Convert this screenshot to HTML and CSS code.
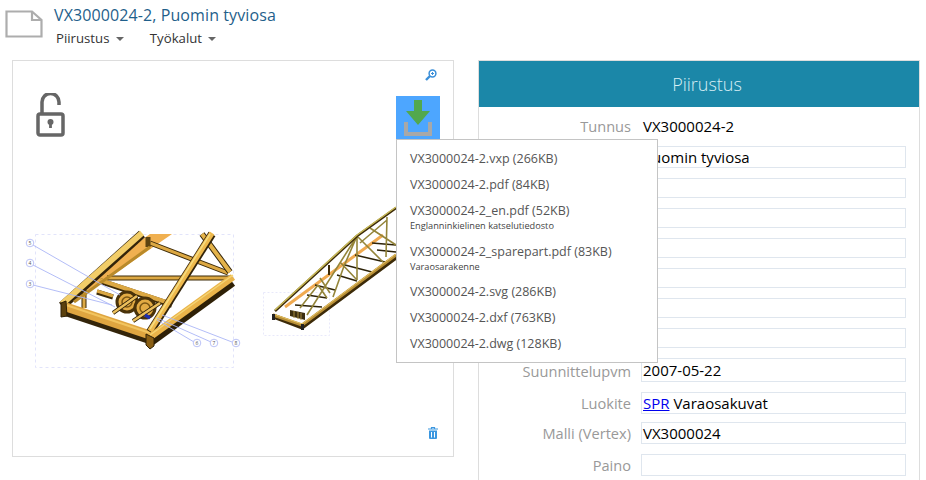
FILE: index.html
```html
<!DOCTYPE html>
<html lang="fi">

<head>
  <meta charset="UTF-8">
  <meta name="viewport" content="width=device-width, initial-scale=1.0">
  <title>VX3000024-2, Puomin tyviosa</title>
  <link rel="stylesheet" href="styles.css">
</head>

<body>
  <header class="top">
    <svg class="doc-icon" width="38" height="28" viewBox="0 0 38 28">
      <path d="M1.500 1.500H27L36.500 10V26.500H1.500Z M27 1.500V10H36.500" fill="#fff" stroke="#adadad" stroke-width="2.200"/>
    </svg>
    <div>
      <h1 class="title">VX3000024-2, Puomin tyviosa</h1>
      <nav class="menu">
        <span class="menu-item">Piirustus <i class="caret"></i></span>
        <span class="menu-item">Työkalut <i class="caret"></i></span>
      </nav>
    </div>
  </header>

  <main class="columns">
    <section class="viewer">
      <div class="viewer-top">
        <svg class="lock" width="30" height="44" viewBox="0 0 30 44">
          <path d="M6 20V9a8.500 8.500 0 0 1 17 0v3" fill="none" stroke="#666" stroke-width="3.500"/>
          <rect x="2" y="21" width="25" height="21" rx="2" fill="none" stroke="#666" stroke-width="3.500"/>
          <circle cx="14.500" cy="29" r="3" fill="#666"/>
          <rect x="13.100" y="29" width="2.800" height="6" fill="#666"/>
        </svg>
        <div class="viewer-tools">
          <svg class="zoom" width="12" height="12" viewBox="0 0 12 12">
            <circle cx="7.500" cy="4.500" r="3.400" fill="none" stroke="#3b8fd9" stroke-width="1.500"/>
            <path d="M5 7L1 11" stroke="#3b8fd9" stroke-width="2.400"/>
            <path d="M6 4.500H9M7.500 3V6" stroke="#3b8fd9"/>
          </svg>
          <div class="download">
            <svg width="44" height="45" viewBox="0 0 44 45">
              <path d="M10 26V38H34V26" fill="none" stroke="#a8a8a8" stroke-width="4"/>
              <path d="M18 4H26V15H34L22 29L10 15H18Z" fill="#52a84e"/>
            </svg>
          </div>
        </div>
      </div>

      <svg class="drawing" width="380" height="170" viewBox="20 200 380 170">
        <rect x="35.500" y="234.500" width="198" height="133" fill="none" stroke="#e2e4fa" stroke-dasharray="3 3"/>
        <rect x="263.500" y="292.500" width="66" height="43" fill="none" stroke="#e8e9fa" stroke-dasharray="2 2"/>

        <!-- iso ristikko -->
        <polygon points="75,302 100,284 172,234 150,234 90,276 73,290" fill="#f0b050"/>
        <g fill="none">
          <g stroke="#3c2a08">
            <path d="M150,243L228,273M107,278H230" stroke-width="5"/>
            <path d="M100,281L172,305" stroke-width="6"/>
            <path d="M84,290V308M97,292L113,297" stroke-width="5"/>
          </g>
          <g stroke="#dca843">
            <path d="M150,243L228,273M107,278H230" stroke-width="3"/>
            <path d="M100,280L172,304" stroke-width="4"/>
            <path d="M84,290V308M97,291L113,296" stroke-width="3"/>
          </g>
          <path d="M148,237V247" stroke="#5c4310" stroke-width="5"/>
          <path d="M62,306L142,234" stroke="#33240a" stroke-width="9"/>
          <path d="M62,304L142,233" stroke="#f2cd68" stroke-width="6"/>
          <path d="M74,302L150,247" stroke="#b98a2a" stroke-width="3"/>
          <g stroke="#4a330a" stroke-width="3" fill="#e2ab44">
            <circle cx="127" cy="302" r="10"/>
            <circle cx="145" cy="308" r="10"/>
          </g>
          <g stroke="#7a5614" stroke-width="1.500">
            <circle cx="127" cy="302" r="5"/>
            <circle cx="145" cy="308" r="5"/>
          </g>
          <path d="M113,313L137,296M133,321L160,303" stroke="#33240a" stroke-width="4"/>
          <path d="M113,313L137,296M133,321L160,303" stroke="#ecc05c" stroke-width="2.500"/>
          <path d="M66,310L150,338" stroke="#33240a" stroke-width="12"/>
          <path d="M66,307L150,335" stroke="#dfa540" stroke-width="9"/>
          <path d="M66,305L150,333" stroke="#f2c560" stroke-width="2"/>
          <path d="M202,234L230,272" stroke="#33240a" stroke-width="6"/>
          <path d="M202,234L230,272" stroke="#e4b34a" stroke-width="4"/>
          <path d="M150,332L212,234" stroke="#33240a" stroke-width="8"/>
          <path d="M150,331L212,233" stroke="#eeb94d" stroke-width="5.500"/>
          <path d="M150,329L210,234" stroke="#f6dd80" stroke-width="1.500"/>
          <path d="M152,342L233,283" stroke="#2e2006" stroke-width="7"/>
          <path d="M150,337L233,277" stroke="#eab44a" stroke-width="7"/>
          <path d="M150,335L233,275" stroke="#f5d574" stroke-width="1.500"/>
        </g>
        <polygon points="146,334 154,338 154,346 150,349 146,345" fill="#8a5f14" stroke="#2e2006"/>
        <polygon points="61,303 66,301 67,316 61,317" fill="#5a400e" stroke="#2e2006"/>
        <path d="M145,315L150,318" stroke="#1e2fb0" stroke-width="3.500"/>

        <g class="leaders" fill="none" stroke="#aab6f6" stroke-width="0.900">
          <path d="M33,245L120,295M33,265L115,307M33,285L112,305M194,342L157,320M211,342L157,318M232,342L162,315"/>
        </g>
        <g class="balloons" fill="#fff" stroke="#b3bbf5" stroke-width="0.900">
          <circle cx="30" cy="243" r="3.800"/>
          <circle cx="30" cy="263" r="3.800"/>
          <circle cx="30" cy="284" r="3.800"/>
          <circle cx="197" cy="343" r="3.800"/>
          <circle cx="214" cy="343" r="3.800"/>
          <circle cx="236" cy="343" r="3.800"/>
        </g>
        <g class="balloon-text">
          <text x="30" y="245">5</text>
          <text x="30" y="265">4</text>
          <text x="30" y="286">3</text>
          <text x="197" y="345">6</text>
          <text x="214" y="345">7</text>
          <text x="236" y="345">8</text>
        </g>

        <!-- pieni ristikko -->
        <g fill="none">
          <path d="M285,307L383,235" stroke="#f0aa50" stroke-width="3"/>
          <g stroke="#2c2208" stroke-width="1.400">
            <path d="M355,255L385,262M345,265L372,272M337,275L357,281M315,285L335,290M307,295L327,298M295,305L322,307M372,243L396,245M377,250L396,252"/>
          </g>
          <path d="M329,265V275" stroke="#3c2a08" stroke-width="2"/>
          <g stroke="#94853a" stroke-width="1.600">
            <path d="M307,315L357,236M333,297L344,266L357,236M357,236V280M387,217L386,257M358,237L383,262M387,220L360,243M340,262L357,280M318,285L327,298M300,308L318,285M320,278L330,293M370,228L396,245"/>
          </g>
          <path d="M275,311L357,236L396,208" stroke="#3c2a08" stroke-width="2.600"/>
          <path d="M275,310L357,235L396,207" stroke="#cabb58" stroke-width="1.500"/>
          <path d="M273,316L302,327L396,257" stroke="#3c2a08" stroke-width="5"/>
          <path d="M273,315L302,325L396,255" stroke="#b88f36" stroke-width="3"/>
          <path d="M273,314L302,324L396,254" stroke="#e5c265" stroke-width="1"/>
        </g>
        <polygon points="290,310 305,313 305,320 290,316" fill="#3c2e10"/>
        <path d="M294,311V318M298,312V319M301,313V320" stroke="#a58a40"/>
        <rect x="272" y="314" width="3" height="6" fill="#222"/>
        <rect x="301" y="324" width="3" height="6" fill="#222"/>
      </svg>

      <svg class="trash" width="10" height="12" viewBox="0 0 10 12">
        <path d="M0 2H10M3.500 2V.5H6.500V2" fill="none" stroke="#3b97e0" stroke-width="1.200"/>
        <path d="M1 3.500H9V11a1 1 0 0 1-1 1H2a1 1 0 0 1-1-1Z" fill="#3b97e0"/>
        <path d="M3.500 5V10.500M6.500 5V10.500" stroke="#fff"/>
      </svg>

      <ul class="files">
        <li>VX3000024-2.vxp (266KB)</li>
        <li>VX3000024-2.pdf (84KB)</li>
        <li>VX3000024-2_en.pdf (52KB)<small>Englanninkielinen katselutiedosto</small></li>
        <li>VX3000024-2_sparepart.pdf (83KB)<small>Varaosarakenne</small></li>
        <li>VX3000024-2.svg (286KB)</li>
        <li>VX3000024-2.dxf (763KB)</li>
        <li>VX3000024-2.dwg (128KB)</li>
      </ul>
    </section>

    <section class="details">
      <h2 class="details-head">Piirustus</h2>
      <div class="details-body">
        <div class="row row-plain"><label>Tunnus</label><div class="value">VX3000024-2</div></div>
        <div class="row"><label></label><div class="value">Puomin tyviosa</div></div>
        <div class="row"><label></label><div class="value"></div></div>
        <div class="row"><label></label><div class="value"></div></div>
        <div class="row"><label></label><div class="value"></div></div>
        <div class="row"><label></label><div class="value"></div></div>
        <div class="row"><label></label><div class="value"></div></div>
        <div class="row"><label></label><div class="value"></div></div>
        <div class="row row-tall"><label>Suunnittelupvm</label><div class="value">2007-05-22</div></div>
        <div class="row row-tight"><label>Luokite</label><div class="value"><a href="#">SPR</a> Varaosakuvat</div></div>
        <div class="row"><label>Malli (Vertex)</label><div class="value">VX3000024</div></div>
        <div class="row"><label>Paino</label><div class="value"></div></div>
      </div>
    </section>
  </main>
</body>

</html>
```

FILE: styles.css
```css
html, body {
  height: 100%;
}

body {
  font-family: "Open Sans", "Noto Sans", sans-serif;
  background-color: #fff;
  margin: 0;
  overflow: hidden;
  color: #222;
}

/* Cabecalho */
.top {
  display: flex;
  height: 60px;
  box-sizing: border-box;
  padding: 8px 0 0 5px;
}

.doc-icon {
  margin: 2px 11px 0 0;
}

.title {
  margin: 0;
  font-size: 16px;
  font-weight: 400;
  line-height: 14px;
  letter-spacing: 0.1px;
  color: #1f5f8b;
}

.menu {
  display: flex;
  gap: 26px;
  margin: 8px 0 0 2px;
}

.menu-item {
  font-size: 13.200px;
  line-height: 16px;
  color: #333;
}

.caret {
  display: inline-block;
  margin-left: 3px;
  vertical-align: 2px;
  border: 4px solid transparent;
  border-top: 4px solid #666;
  border-bottom: 0;
}

/* Colunas */
.columns {
  display: flex;
  gap: 24px;
  padding: 0 6px 0 12px;
  align-items: flex-start;
}

.viewer {
  position: relative;
  box-sizing: border-box;
  width: 442px;
  height: 397px;
  border: 1px solid #ddd;
  flex: none;
}

.viewer-top {
  display: flex;
  justify-content: space-between;
  padding: 32px 13px 0 23px;
}

.viewer-tools {
  display: flex;
  flex-direction: column;
  align-items: flex-end;
  margin-top: -24px;
}

.zoom {
  margin-bottom: 15px;
  margin-right: 3px;
}

.download {
  width: 44px;
  height: 45px;
  background-color: #4da6ff;
}

.drawing {
  position: absolute;
  left: 7px;
  top: 139px;
}

.balloon-text text {
  font-size: 5px;
  text-anchor: middle;
  fill: #555;
}

.trash {
  position: absolute;
  right: 15px;
  bottom: 17px;
}

/* Menu de arquivos */
.files {
  position: absolute;
  left: 383px;
  top: 78px;
  width: 262px;
  box-sizing: border-box;
  margin: 0;
  padding: 6px 0 5px;
  list-style: none;
  background-color: #fff;
  border: 1px solid #c4c4c4;
  font-size: 12.500px;
  color: #555;
}

.files li {
  padding: 4px 13px 5px;
  line-height: 17px;
  white-space: nowrap;
}

.files small {
  display: block;
  font-size: 9.200px;
  line-height: 14.500px;
  color: #444;
}

/* Detalhes */
.details {
  width: 442px;
  height: 430px;
  box-sizing: border-box;
  border: 1px solid #ddd;
  flex: none;
}

.details-head {
  margin: 0;
  height: 46px;
  padding-left: 16px;
  font-size: 18px;
  font-weight: 300;
  line-height: 46px;
  text-align: center;
  color: #d8eef5;
  background-color: #1b87a8;
}

.details-body {
  padding-top: 7px;
}

.row {
  display: flex;
  margin-bottom: 10px;
}

.row-plain {
  padding-top: 1px;
  margin-bottom: 9px;
}

.row-tall {
  align-items: flex-start;
  margin-bottom: 8px;
}

.row-tall label {
  line-height: 26px;
}

.row-tall .value {
  min-height: 24px;
  padding-top: 1px;
  line-height: 21px;
}

.row-tight {
  margin-bottom: 8px;
}

.row label {
  width: 152px;
  padding-right: 10px;
  font-size: 14.600px;
  text-align: right;
  color: #999;
  flex: none;
}

.row:not(.row-tall) label {
  line-height: 22px;
}

.value {
  box-sizing: border-box;
  width: 265px;
  min-height: 20px;
  padding: 0 1px;
  border: 1px solid #dfe6ee;
  font-size: 15px;
  line-height: 20px;
  color: #000;
}

.row-plain .value {
  border-color: transparent;
}
```
